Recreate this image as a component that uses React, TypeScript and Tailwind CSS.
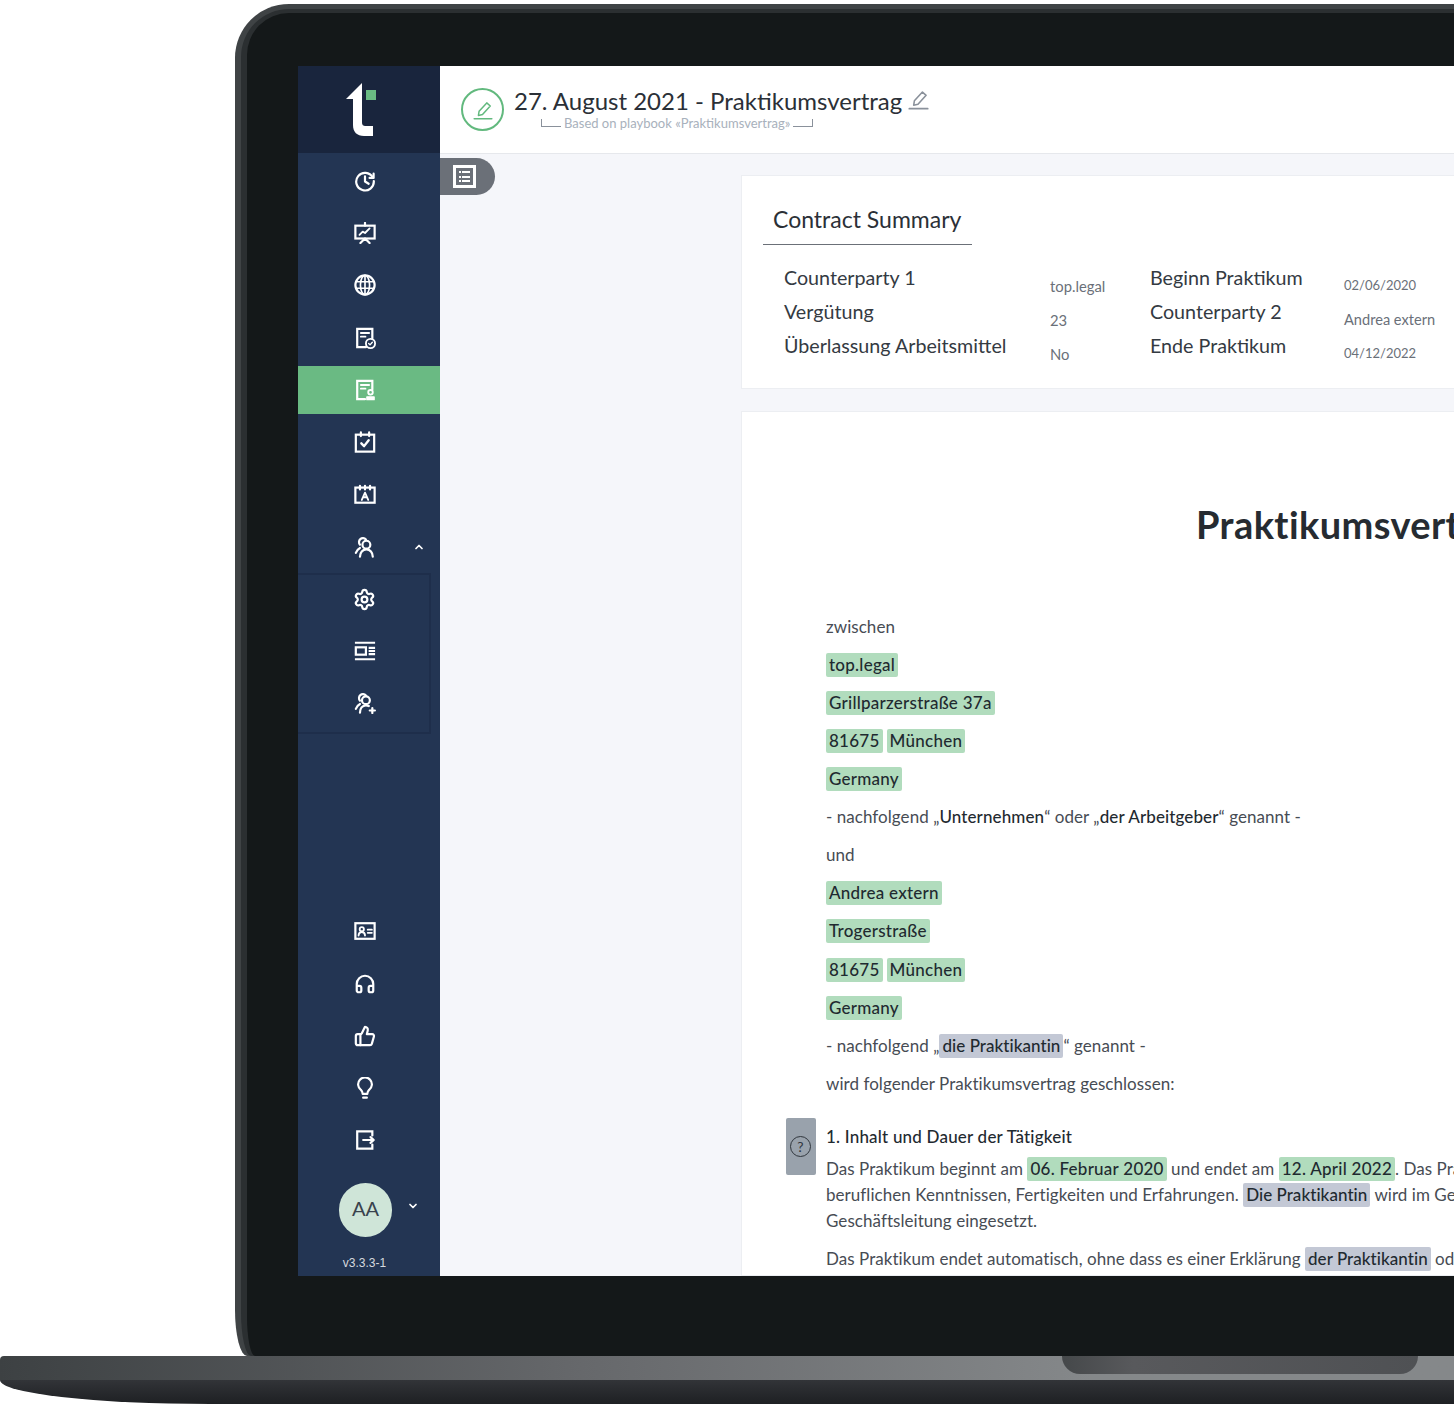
import type { ReactNode } from 'react';
import { ChevronDown, ChevronUp, Headphones, Settings, ThumbsUp } from 'lucide-react';

function Ico({ children, size = 22 }: { children: ReactNode; size?: number }) {
  return (
    <svg width={size} height={size} viewBox="0 0 24 24" fill="none" stroke="currentColor" strokeWidth="2.4" strokeLinecap="round" strokeLinejoin="round">
      {children}
    </svg>
  );
}

const HistoryIcon = () => (
  <Ico>
    <path d="M20.4 8A9.6 9.6 0 1 0 21.6 12" />
    <path d="M21.4 4V8.600h-4.400" />
    <path d="M12 7v5.500l4 2.500" />
  </Ico>
);
const PresentationIcon = () => (
  <Ico>
    <path d="M12 1v3" />
    <rect x="1.500" y="4" width="21" height="14" strokeLinejoin="miter" />
    <path d="M6 14l3.500-3.500 2.500 1.500 5-5" strokeWidth="2" />
    <path d="M7 23l5-5 5 5" />
  </Ico>
);
const GlobeIcon = () => (
  <Ico>
    <circle cx="12" cy="12" r="10.500" />
    <ellipse cx="12" cy="12" rx="5" ry="10.500" strokeWidth="1.800" />
    <path d="M12 2v20M2 8.500h20M2 15.500h20" strokeWidth="1.800" />
  </Ico>
);
const DocCheckIcon = () => (
  <Ico>
    <path d="M13 22H3.500V2H20v10.500" strokeLinejoin="miter" />
    <path d="M7.500 6.500h9M7.500 10.500h5" strokeWidth="2" />
    <circle cx="18" cy="18" r="5" strokeWidth="2" />
    <path d="M16 18l1.500 1.500 2.500-2.800" strokeWidth="1.500" />
  </Ico>
);
const DocUserIcon = () => (
  <Ico>
    <path d="M12 22H3.500V2H20v9.500" strokeLinejoin="miter" />
    <path d="M7.500 6.500h9M7.500 10.500h5" strokeWidth="2" />
    <circle cx="18" cy="14.500" r="2.500" strokeWidth="2" />
    <path d="M14 19.500h8v3h-8z" fill="currentColor" strokeWidth="1.400" />
  </Ico>
);
const CalendarCheckIcon = () => (
  <Ico>
    <rect x="2" y="4" width="20" height="18.500" strokeLinejoin="miter" />
    <path d="M7.500 1.500v4M16.500 1.500v4" />
    <path d="M8 13.500l3 3 5-6.500" strokeWidth="2.600" />
  </Ico>
);
const CalendarPersonIcon = () => (
  <Ico>
    <rect x="1.500" y="5" width="21" height="16.500" strokeLinejoin="miter" />
    <path d="M6.500 3v4M12 3v4M17.500 3v4" />
    <path d="M8.500 18.500l3.500-8 3.500 8M10 15.500h4" strokeWidth="2" />
  </Ico>
);
const UsersIcon = () => (
  <Ico>
    <path d="M6.500 9.500A4.200 4.200 0 1 1 13 3.800" />
    <circle cx="13.500" cy="9.500" r="4.300" />
    <path d="M6.500 22.500c0-4.500 3-8 7-8s7 3.500 7 8" />
    <path d="M2 18.500c.8-2.200 2.400-4.500 4.500-5.500" />
  </Ico>
);
const LayoutIcon = () => (
  <Ico>
    <path d="M1 3h22M1 21h22" strokeLinecap="butt" />
    <rect x="2" y="8" width="11" height="8" strokeLinejoin="miter" />
    <path d="M16 8.500h7M16 12h7M16 15.500h7" strokeLinecap="butt" />
  </Ico>
);
const UsersPlusIcon = () => (
  <Ico>
    <path d="M6.500 9.500A4.200 4.200 0 1 1 13 3.800" />
    <circle cx="13" cy="9" r="4.300" />
    <path d="M6.500 22.500c0-4.500 2.500-8 6.500-8 1.200 0 2.300.3 3.200.8" />
    <path d="M2 18.500c.8-2.200 2.400-4.500 4.500-5.500" />
    <path d="M20 17.500v5.500M17.200 20.200h5.600" />
  </Ico>
);
const IdCardIcon = () => (
  <Ico>
    <rect x="1.500" y="3.500" width="21" height="17" strokeLinejoin="miter" />
    <circle cx="8.500" cy="10" r="2.300" strokeWidth="2" />
    <path d="M5 17c0-2.300 1.400-3.800 3.500-3.800S12 14.700 12 17" strokeWidth="2" />
    <path d="M15 10.500h4.500M15 14h4.500" strokeWidth="2" />
  </Ico>
);
const BulbIcon = () => (
  <Ico>
    <path d="M9.500 18.500c0-2-.6-3-2-4.500a7.500 7.500 0 1 1 9 0c-1.400 1.500-2 2.500-2 4.500z" />
    <path d="M10 22.500h4" />
  </Ico>
);
const ExitIcon = () => (
  <Ico>
    <path d="M20 7V2.500H3.500v19H20V17" strokeLinejoin="miter" />
    <path d="M10 12h11M18 8.800l3.500 3.200-3.500 3.200" />
  </Ico>
);
const PencilIcon = ({ size = 22 }: { size?: number }) => (
  <svg width={size} height={size} viewBox="0 0 24 24" fill="none" stroke="currentColor" strokeWidth="1.800" strokeLinejoin="round">
    <path d="M6.500 18.500l.8-5L16.500 3.500l4.200 3.700-9.300 10.300z" />
    <path d="M1.500 22.500h21" strokeLinecap="round" strokeWidth="2" />
  </svg>
);

function NavRow({ children, active, className = '' }: { children: ReactNode; active?: boolean; className?: string }) {
  return (
    <div className={`flex h-[48px] shrink-0 items-center justify-center pr-[9px] text-white ${active ? 'bg-[#6aba83]' : ''} ${className}`}>
      {children}
    </div>
  );
}

function Hl({ children, grey }: { children: ReactNode; grey?: boolean }) {
  return (
    <span className={`inline-block rounded-[2px] px-[3px] leading-[24px] font-medium text-[#1f2a30] ${grey ? 'bg-[#c3c8d5] tracking-[0.05px]' : 'bg-[#b1dcbd] tracking-[0.25px]'}`}>
      {children}
    </span>
  );
}

function Line({ children, className = '' }: { children: ReactNode; className?: string }) {
  return <div className={`flex h-[38px] items-center gap-[4px] whitespace-pre ${className}`}>{children}</div>;
}

function SummaryRow({ a, b, c, d, dClass = 'text-[13px]' }: { a: string; b: string; c: string; d: string; dClass?: string }) {
  return (
    <div className="grid h-[34px] grid-cols-[266px_100px_194px_200px] items-center">
      <span className="pb-[2px] text-[19.7px] whitespace-nowrap text-[#343a42]">{a}</span>
      <span className="pt-[14px] text-[14.8px] text-[#6a7079]">{b}</span>
      <span className="pb-[2px] text-[19.7px] whitespace-nowrap text-[#343a42]">{c}</span>
      <span className={`pt-[14px] text-[#6a7079] ${dClass}`}>{d}</span>
    </div>
  );
}

function Sidebar() {
  return (
    <aside className="flex h-full w-[142px] shrink-0 flex-col bg-[#233553]">
      <div className="flex h-[87px] shrink-0 items-start bg-[#19253d] pt-[17px] pl-[48px]">
        <svg width="30" height="53" viewBox="0 0 30 53">
          <path d="M16 0L0 16h7v26c0 7 4 11 11 11h9V43h-7c-3 0-4-1-4-4z" fill="#fff" />
          <rect x="20" y="7" width="10" height="10" fill="#69bb83" />
        </svg>
      </div>
      <div className="flex flex-col gap-[4px] pt-[4px]">
        <NavRow><HistoryIcon /></NavRow>
        <NavRow><PresentationIcon /></NavRow>
        <NavRow><GlobeIcon /></NavRow>
        <NavRow className="mt-[1px]"><DocCheckIcon /></NavRow>
        <NavRow active><DocUserIcon /></NavRow>
        <NavRow><CalendarCheckIcon /></NavRow>
        <NavRow><CalendarPersonIcon /></NavRow>
        <div className="mt-[1px] flex h-[48px] items-center pl-[56px] text-white">
          <UsersIcon />
          <ChevronUp size={12} strokeWidth={3.500} className="ml-[37px]" />
        </div>
      </div>
      <div className="mt-[2px] flex h-[161px] w-[133px] flex-col gap-[4px] border-y-2 border-r-2 border-[#1e2e4b]">
        <div className="flex h-[48px] items-center justify-center pl-[2px] text-white"><Settings size={23} strokeWidth={2.300} /></div>
        <div className="flex h-[48px] items-center justify-center pl-[2px] text-white"><LayoutIcon /></div>
        <div className="flex h-[48px] items-center justify-center pl-[2px] text-white"><UsersPlusIcon /></div>
      </div>
      <div className="mt-auto flex flex-col gap-[4px]">
        <NavRow className="mb-[1px]"><IdCardIcon /></NavRow>
        <NavRow><Headphones size={22} strokeWidth={2.400} /></NavRow>
        <NavRow><ThumbsUp size={22} strokeWidth={2.400} /></NavRow>
        <NavRow><BulbIcon /></NavRow>
        <NavRow><ExitIcon /></NavRow>
      </div>
      <div className="mt-[19px] flex items-start pl-[41px]">
        <div className="flex h-[54px] w-[53px] items-center justify-center rounded-full bg-[#cfe5d8] pb-[4px] text-[20px] text-[#39424d]">AA</div>
        <ChevronDown size={12} strokeWidth={3.500} className="mt-[17px] ml-[15px] text-white" />
      </div>
      <div className="mt-[18px] mb-[5px] pr-[9px] text-center font-['Liberation_Sans',sans-serif] text-[12px] leading-[16px] text-[#d5d9df]">v3.3.3-1</div>
    </aside>
  );
}

function Header() {
  return (
    <header className="flex h-[88px] shrink-0 items-start border-b border-[#e6e8ec] bg-white pt-[22px] pl-[21px]">
      <div className="flex h-[43px] w-[43px] items-center justify-center rounded-full border-2 border-[#62b97e] text-[#62b97e]">
        <PencilIcon size={20} />
      </div>
      <div className="ml-[10px] -mt-[3px]">
        <div className="flex items-center text-[24px] leading-[32px] whitespace-nowrap text-[#2b3037]">
          27. August 2021 - Praktikumsvertrag
          <span className="ml-[6px] -mt-[3px] text-[#8a919b]"><PencilIcon size={21} /></span>
        </div>
        <div className="-mt-[2px] flex items-end pl-[27px] text-[13px] leading-[16px] whitespace-nowrap text-[#a8b1bc]">
          <span className="mb-[4px] h-[8px] w-[20px] border-b border-l border-[#8a919b]" />
          <span className="mx-[3px]">Based on playbook «Praktikumsvertrag»</span>
          <span className="mb-[4px] h-[8px] w-[20px] border-r border-b border-[#8a919b]" />
        </div>
      </div>
    </header>
  );
}

function SummaryCard() {
  return (
    <section className="h-[214px] border border-[#eceef2] bg-white">
      <div className="ml-[21px] w-[209px] border-b border-[#6b7078] pt-[27px] pb-[9px] pl-[10px] text-[23px] leading-[32px] whitespace-nowrap text-[#2b3037]">
        Contract Summary
      </div>
      <div className="mt-[16px] pl-[42px]">
        <SummaryRow a="Counterparty 1" b="top.legal" c="Beginn Praktikum" d="02/06/2020" />
        <SummaryRow a="Vergütung" b="23" c="Counterparty 2" d="Andrea extern" dClass="text-[14.6px]" />
        <SummaryRow a="Überlassung Arbeitsmittel" b="No" c="Ende Praktikum" d="04/12/2022" />
      </div>
    </section>
  );
}

function DocumentCard() {
  return (
    <section className="mt-[22px] flex-1 border border-[#eceef2] bg-white text-[17px] tracking-[0.05px] text-[#474c54]">
      <h1 className="pt-[88px] pl-[454px] text-[38px] leading-[48px] font-bold tracking-[0.4px] whitespace-nowrap text-[#262b31]">Praktikumsvertrag</h1>
      <div className="mt-[60px] pl-[84px]">
        <Line>zwischen</Line>
        <Line><Hl>top.legal</Hl></Line>
        <Line><Hl>Grillparzerstraße 37a</Hl></Line>
        <Line><Hl>81675</Hl><Hl>München</Hl></Line>
        <Line><Hl>Germany</Hl></Line>
        <div className="flex h-[38px] items-center whitespace-pre">- nachfolgend „<span className="font-medium tracking-[0.1px] text-[#1f2a30]">Unternehmen</span>“ oder „<span className="font-medium tracking-[0.1px] text-[#1f2a30]">der Arbeitgeber</span>“ genannt -</div>
        <Line>und</Line>
        <Line><Hl>Andrea extern</Hl></Line>
        <Line><Hl>Trogerstraße</Hl></Line>
        <Line className="mt-[1px]"><Hl>81675</Hl><Hl>München</Hl></Line>
        <Line><Hl>Germany</Hl></Line>
        <div className="flex h-[38px] items-center whitespace-pre">- nachfolgend „<Hl grey>die Praktikantin</Hl>“ genannt -</div>
        <Line>wird folgender Praktikumsvertrag geschlossen:</Line>
      </div>
      <div className="mt-[15px] flex pl-[44px]">
        <div className="flex h-[57px] w-[30px] shrink-0 items-center justify-center rounded-[2px] bg-[#99a2ac] pr-[1px] text-[#30363d]">
          <span className="flex h-[21px] w-[21px] items-center justify-center rounded-full border border-[#30363d] text-[14px] leading-none">?</span>
        </div>
        <div className="ml-[10px] pt-[6px] leading-[26px] whitespace-pre">
          <div className="font-medium tracking-[0.2px] text-[#1f2a30]">1. Inhalt und Dauer der Tätigkeit</div>
          <div className="mt-[6px]">Das Praktikum beginnt am <Hl>06. Februar 2020</Hl> und endet am <Hl>12. April 2022</Hl>. Das Praktikum dient</div>
          <div>beruflichen Kenntnissen, Fertigkeiten und Erfahrungen. <Hl grey>Die Praktikantin</Hl> wird im Geschäftsbereich</div>
          <div>Geschäftsleitung eingesetzt.</div>
          <div className="mt-[12px]">Das Praktikum endet automatisch, ohne dass es einer Erklärung <Hl grey>der Praktikantin</Hl> oder</div>
        </div>
      </div>
    </section>
  );
}

function TocRow() {
  return (
    <span className="flex items-center gap-[1px]">
      <span className="h-[2px] w-[2px] bg-white" />
      <span className="h-[2px] w-[8px] bg-white" />
    </span>
  );
}

export default function App() {
  return (
    <div className="h-[1404px] w-[1454px] overflow-hidden bg-white pt-[4px] font-['Lato',sans-serif]">
      {/* lid */}
      <div className="ml-[235px] h-[1352px] w-[1219px] rounded-tl-[54px] rounded-bl-[12px_46px] bg-[#3f4345] pt-[5px] pl-[6px]">
        <div className="h-full rounded-tl-[48px] rounded-bl-[10px_44px] bg-[#2b2f31] pt-[4px] pl-[6px]">
          <div className="h-full rounded-tl-[42px] rounded-bl-[8px_40px] bg-[#141819] pt-[53px] pl-[51px]">
            <div className="flex h-[1210px] w-[1156px] overflow-hidden">
              <Sidebar />
              <main className="flex min-w-0 flex-1 flex-col bg-[#f5f6fa]">
                <Header />
                <div className="flex min-h-0 flex-1 overflow-hidden">
                  <div className="mt-[4px] flex h-[37px] w-[55px] shrink-0 items-center rounded-r-full bg-[#6b7078] pl-[13px]">
                    <span className="flex h-[23px] w-[23px] items-center justify-center border-[3px] border-white">
                      <span className="flex h-[11px] flex-col justify-between">
                        <TocRow />
                        <TocRow />
                        <TocRow />
                      </span>
                    </span>
                  </div>
                  <div className="ml-[246px] flex w-[900px] shrink-0 flex-col pt-[21px]">
                    <SummaryCard />
                    <DocumentCard />
                  </div>
                </div>
              </main>
            </div>
          </div>
        </div>
      </div>
      {/* base */}
      <div className="h-[24px] rounded-tl-[4px] bg-gradient-to-r from-[#3d4143] via-[#66686b] via-40% to-[#85888a] to-75%">
        <div className="ml-[1062px] h-[18px] w-[356px] rounded-b-[18px] bg-gradient-to-r from-[#45484a] via-[#58595c] via-20% to-[#4f5154]" />
      </div>
      <div className="h-[24px] rounded-bl-[210px_24px] bg-gradient-to-b from-[#323438] to-[#1e2023]" />
    </div>
  );
}
